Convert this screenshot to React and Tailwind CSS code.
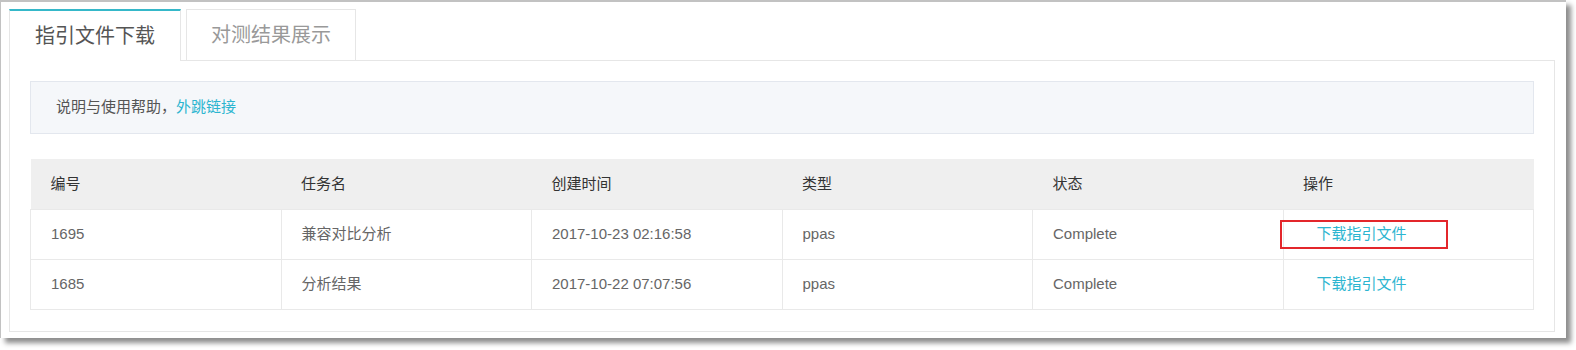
const rows = [
  { id: "1695", name: "兼容对比分析", time: "2017-10-23 02:16:58", type: "ppas", status: "Complete", marked: true },
  { id: "1685", name: "分析结果", time: "2017-10-22 07:07:56", type: "ppas", status: "Complete" },
];

const heads = ["编号", "任务名", "创建时间", "类型", "状态", "操作"];

const font = "font-['Liberation_Sans','Noto_Sans_CJK_SC',sans-serif]";

export default function App() {
  return (
    <div className={`bg-white w-[1576px] h-[350px] ${font}`}>
      <div className="w-[1566px] h-[338px] border-t-2 border-l border-[#c2c2c2] bg-white shadow-[5px_5px_5px_rgba(0,0,0,0.45)] pl-[8px] pt-[7px]">
        {/* tabs */}
        <div className="flex items-end h-[51px]">
          <div className="w-[172px] h-[52px] border border-b-0 border-[#e6e6e6] border-t-2 border-t-[#35b8c9] bg-white flex items-center justify-center text-[20px] text-[#555] relative z-10 -mb-px">
            指引文件下载
          </div>
          <div className="ml-[5px] w-[170px] h-[51px] border border-b-0 border-[#e6e6e6] flex items-center justify-center text-[20px] text-[#999]">
            对测结果展示
          </div>
        </div>

        {/* panel */}
        <div className="w-[1546px] h-[272px] border border-[#e6e6e6] px-[20px] pt-[20px]">
          <div className="h-[53px] border border-[#e3e7ee] bg-[#f5f7fa] flex items-center pl-[25px] text-[15px] text-[#555]">
            说明与使用帮助，<a className="text-[#2cb5d0]">外跳链接</a>
          </div>

          <table className="mt-[25px] w-full table-fixed border-collapse text-[15px]">
            <thead>
              <tr className="bg-[#efefef] h-[50px]">
                {heads.map((h) => (
                  <th key={h} className="text-left font-normal text-[#333] pl-[20px]">
                    {h}
                  </th>
                ))}
              </tr>
            </thead>
            <tbody>
              {rows.map((r) => (
                <tr key={r.id} className="h-[50px] text-[#666]">
                  <td className="border border-[#e9e9e9] pl-[20px]">{r.id}</td>
                  <td className="border border-[#e9e9e9] pl-[20px]">{r.name}</td>
                  <td className="border border-[#e9e9e9] pl-[20px]">{r.time}</td>
                  <td className="border border-[#e9e9e9] pl-[20px]">{r.type}</td>
                  <td className="border border-[#e9e9e9] pl-[20px]">{r.status}</td>
                  <td className="border border-[#e9e9e9] pl-[33px] relative">
                    <a className="text-[#2cb5d0]">下载指引文件</a>
                    {r.marked && (
                      <span className="absolute left-[-4px] top-[10px] w-[168px] h-[29px] border-2 border-[#e3262b]" />
                    )}
                  </td>
                </tr>
              ))}
            </tbody>
          </table>
        </div>
      </div>
    </div>
  );
}
